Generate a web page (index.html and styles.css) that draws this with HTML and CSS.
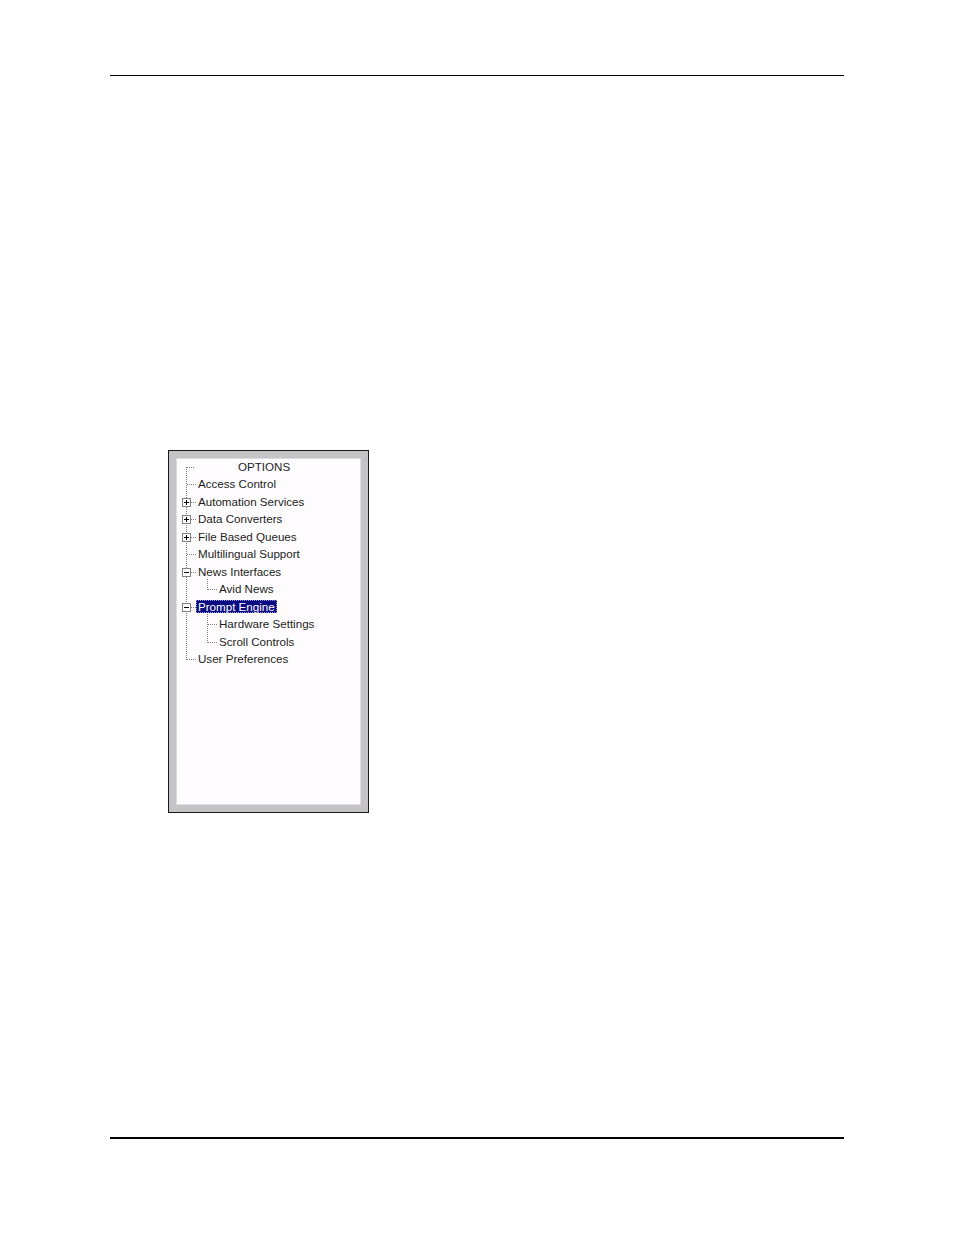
FILE: index.html
```html
<!DOCTYPE html>
<html>
<head>
<meta charset="utf-8">
<link rel="stylesheet" href="styles.css">
</head>
<body>
<div class="page">
  <div class="rule-top"></div>
  <div class="figure">
    <div class="panel">
      <div class="tree">
        <svg class="lines" width="185" height="347" viewBox="0 0 185 347" shape-rendering="crispEdges">
          <g stroke="#808080" stroke-width="1" stroke-dasharray="1 1" fill="none">
            <line x1="10.5" y1="9" x2="10.5" y2="202"/>
            <line x1="11" y1="9.5" x2="18" y2="9.5"/>
            <line x1="11" y1="26.5" x2="21" y2="26.5"/>
            <line x1="15" y1="44.5" x2="21" y2="44.5"/>
            <line x1="15" y1="61.5" x2="21" y2="61.5"/>
            <line x1="15" y1="79.5" x2="21" y2="79.5"/>
            <line x1="11" y1="96.5" x2="21" y2="96.5"/>
            <line x1="15" y1="114.5" x2="21" y2="114.5"/>
            <line x1="15" y1="149.5" x2="21" y2="149.5"/>
            <line x1="11" y1="201.5" x2="21" y2="201.5"/>
            <line x1="31.5" y1="121" x2="31.5" y2="132"/>
            <line x1="32" y1="131.5" x2="42" y2="131.5"/>
            <line x1="31.5" y1="156" x2="31.5" y2="185"/>
            <line x1="32" y1="166.5" x2="42" y2="166.5"/>
            <line x1="32" y1="184.5" x2="42" y2="184.5"/>
          </g>
          <g stroke="#808080" fill="#ffffff">
            <rect x="6.5" y="40.5" width="8" height="8"/>
            <rect x="6.5" y="57.5" width="8" height="8"/>
            <rect x="6.5" y="75.5" width="8" height="8"/>
            <rect x="6.5" y="110.5" width="8" height="8"/>
            <rect x="6.5" y="145.5" width="8" height="8"/>
          </g>
          <g stroke="#000000" fill="none">
            <line x1="8" y1="44.5" x2="13" y2="44.5"/>
            <line x1="10.5" y1="42" x2="10.5" y2="47"/>
            <line x1="8" y1="61.5" x2="13" y2="61.5"/>
            <line x1="10.5" y1="59" x2="10.5" y2="64"/>
            <line x1="8" y1="79.5" x2="13" y2="79.5"/>
            <line x1="10.5" y1="77" x2="10.5" y2="82"/>
            <line x1="8" y1="114.5" x2="13" y2="114.5"/>
            <line x1="8" y1="149.5" x2="13" y2="149.5"/>
          </g>
        </svg>
        <div class="rows">
          <div class="row root"><span class="label">OPTIONS</span></div>
          <div class="row lvl1"><span class="label">Access Control</span></div>
          <div class="row lvl1"><span class="label">Automation Services</span></div>
          <div class="row lvl1"><span class="label">Data Converters</span></div>
          <div class="row lvl1"><span class="label">File Based Queues</span></div>
          <div class="row lvl1"><span class="label">Multilingual Support</span></div>
          <div class="row lvl1"><span class="label">News Interfaces</span></div>
          <div class="row lvl2"><span class="label">Avid News</span></div>
          <div class="row lvl1"><span class="label selected">Prompt Engine</span></div>
          <div class="row lvl2"><span class="label">Hardware Settings</span></div>
          <div class="row lvl2"><span class="label">Scroll Controls</span></div>
          <div class="row lvl1"><span class="label">User Preferences</span></div>
        </div>
      </div>
    </div>
  </div>
  <div class="rule-bottom"></div>
</div>
</body>
</html>
```

FILE: styles.css
```css
html, body {
  margin: 0;
  padding: 0;
  background: #ffffff;
}

.page {
  width: 954px;
  height: 1235px;
  padding-top: 75px;
  box-sizing: border-box;
  font-family: "Liberation Sans", Arial, sans-serif;
}

.rule-top {
  margin: 0 110px;
  height: 1px;
  background: #000000;
}

.figure {
  margin-top: 374px;
  margin-left: 168px;
}

.panel {
  width: 185px;
  height: 347px;
  padding: 7px;
  border: 1px solid #1a1a1a;
  background: #c4c3c5;
}

.tree {
  position: relative;
  width: 185px;
  height: 347px;
  background: #fefcfe;
  box-shadow: inset 0 0 0 1px #dedcde;
}

.lines {
  position: absolute;
  left: 0;
  top: 0;
  pointer-events: none;
}

.rows {
  margin-top: -0.5px;
}

.row {
  height: 17.5px;
  display: flex;
  align-items: center;
  font-size: 11.6px;
  color: #1c1c1c;
  white-space: nowrap;
}

.root {
  padding-left: 60px;
}

.lvl1 {
  padding-left: 20px;
}

.lvl2 {
  padding-left: 41px;
}

.label {
  display: inline-block;
  padding: 0 2px;
  line-height: 13px;
}

.selected {
  background: #0a0a82;
  color: #ffffff;
  outline: 1px dotted #9a9ac8;
  outline-offset: -1px;
}

.rule-bottom {
  margin: 324px 110px 0;
  height: 2px;
  background: #000000;
}
```
